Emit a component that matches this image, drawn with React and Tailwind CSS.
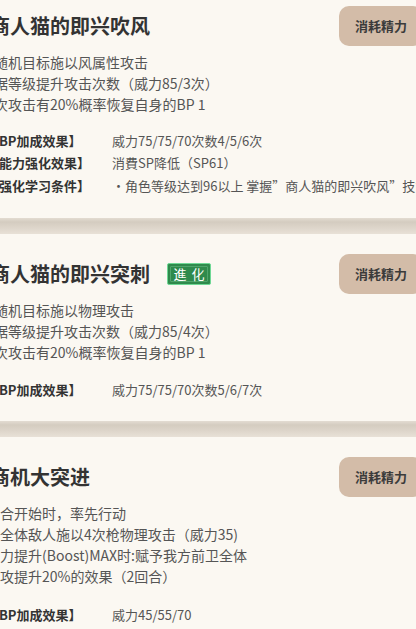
import React from "react";

const FONT = "font-['Microsoft_YaHei','Noto_Sans_CJK_SC',sans-serif]";

function Badge() {
  return (
    <span className="ml-[17px] relative inline-flex h-[22px] w-[44px] items-center justify-center rounded-[2px] border border-[#6fd895] bg-[#2f8a4c] text-[13px] leading-none text-white">
      <span className="absolute inset-[2px] rounded-[1px] border border-[#4fa56b]" />
      <span className="relative tracking-[5px] pl-[5px]">進化</span>
    </span>
  );
}

function Card({ title, badge, desc, descClass, rows, rowsMt, pb }) {
  return (
    <div className={"bg-[#fbf8f2] pt-5 " + pb}>
      <div className="flex w-[437px] items-center justify-between">
        <div className="ml-[4px] flex items-center">
          <h2 className="text-[20px] font-bold leading-[28px] text-[#333333]">{title}</h2>
          {badge ? <Badge /> : null}
        </div>
        <div className="flex h-10 w-[84px] items-center justify-center rounded-[10px] bg-[#d3bca8] text-[13px] font-bold text-[#3b3b3b]">
          消耗精力
        </div>
      </div>
      <div className={"mt-[6px] text-[14px] leading-[21px] text-[#555555] whitespace-nowrap " + descClass}>
        {desc.map((d, i) => (
          <div key={i}>{d}</div>
        ))}
      </div>
      <div className={rowsMt}>
        {rows.map((r, i) => (
          <div key={i} className="flex h-[22.5px] items-center whitespace-nowrap text-[13px]">
            <div className="w-[126px] shrink-0 font-bold text-[#333333]">{r[0]}</div>
            <div className="text-[#555555]">{r[1]}</div>
          </div>
        ))}
      </div>
    </div>
  );
}

function Sep() {
  return <div className="h-4 bg-[linear-gradient(to_bottom,#e3dcd2_0%,#d4ccc0_25%,#ddd5ca_60%,#e8e1d7_100%)]" />;
}

export default function App() {
  return (
    <div className={"h-[629px] w-[416px] overflow-hidden bg-[#fbf8f2] " + FONT}>
      <div className="-ml-[14px] -mt-[14px] w-[640px]">
        <Card
          title="商人猫的即兴吹风"
          descClass="-ml-[6px]"
          rowsMt="mt-[14px]"
          pb="pb-[21px]"
          desc={[
            "对随机目标施以风属性攻击",
            "根据等级提升攻击次数（威力85/3次）",
            "每次攻击有20%概率恢复自身的BP 1",
          ]}
          rows={[
            ["【BP加成效果】", "威力75/75/70次数4/5/6次"],
            ["【能力强化效果】", "消費SP降低（SP61）"],
            ["【强化学习条件】", "・角色等级达到96以上 掌握\u201D商人猫的即兴吹风\u201D技能"],
          ]}
        />
        <Sep />
        <Card
          title="商人猫的即兴突刺"
          badge
          descClass="-ml-[6px]"
          rowsMt="mt-[16px]"
          pb="pb-[20px]"
          desc={[
            "对随机目标施以物理攻击",
            "根据等级提升攻击次数（威力85/4次）",
            "每次攻击有20%概率恢复自身的BP 1",
          ]}
          rows={[["【BP加成效果】", "威力75/75/70次数5/6/7次"]]}
        />
        <Sep />
        <Card
          title="商机大突进"
          descClass="ml-0"
          rowsMt="mt-[16px]"
          pb="pb-[20px]"
          desc={[
            "回合开始时，率先行动",
            "对全体敌人施以4次枪物理攻击（威力35)",
            "能力提升(Boost)MAX时:赋予我方前卫全体",
            "物攻提升20%的效果（2回合）",
          ]}
          rows={[
            ["【BP加成效果】", "威力45/55/70"],
            ["【能力强化效果】", "消費SP降低"],
          ]}
        />
      </div>
    </div>
  );
}
